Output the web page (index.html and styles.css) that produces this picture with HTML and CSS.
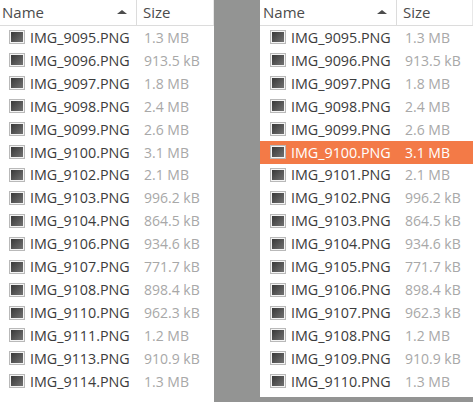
FILE: index.html
```html
<!DOCTYPE html>
<html lang="en">
<head>
  <meta charset="utf-8">
  <title>Files</title>
  <link rel="stylesheet" href="styles.css">
</head>
<body>
  <section class="pane">
    <div class="head"><div class="col-name">Name<span class="arrow"></span></div><div class="col-size">Size</div></div>
    <div class="row"><i class="thumb"></i><span class="name">IMG_9095.PNG</span><span class="size">1.3 MB</span></div>
    <div class="row"><i class="thumb"></i><span class="name">IMG_9096.PNG</span><span class="size">913.5 kB</span></div>
    <div class="row"><i class="thumb"></i><span class="name">IMG_9097.PNG</span><span class="size">1.8 MB</span></div>
    <div class="row"><i class="thumb"></i><span class="name">IMG_9098.PNG</span><span class="size">2.4 MB</span></div>
    <div class="row"><i class="thumb"></i><span class="name">IMG_9099.PNG</span><span class="size">2.6 MB</span></div>
    <div class="row"><i class="thumb"></i><span class="name">IMG_9100.PNG</span><span class="size">3.1 MB</span></div>
    <div class="row"><i class="thumb"></i><span class="name">IMG_9102.PNG</span><span class="size">2.1 MB</span></div>
    <div class="row"><i class="thumb"></i><span class="name">IMG_9103.PNG</span><span class="size">996.2 kB</span></div>
    <div class="row"><i class="thumb"></i><span class="name">IMG_9104.PNG</span><span class="size">864.5 kB</span></div>
    <div class="row"><i class="thumb"></i><span class="name">IMG_9106.PNG</span><span class="size">934.6 kB</span></div>
    <div class="row"><i class="thumb"></i><span class="name">IMG_9107.PNG</span><span class="size">771.7 kB</span></div>
    <div class="row"><i class="thumb"></i><span class="name">IMG_9108.PNG</span><span class="size">898.4 kB</span></div>
    <div class="row"><i class="thumb"></i><span class="name">IMG_9110.PNG</span><span class="size">962.3 kB</span></div>
    <div class="row"><i class="thumb"></i><span class="name">IMG_9111.PNG</span><span class="size">1.2 MB</span></div>
    <div class="row"><i class="thumb"></i><span class="name">IMG_9113.PNG</span><span class="size">910.9 kB</span></div>
    <div class="row"><i class="thumb"></i><span class="name">IMG_9114.PNG</span><span class="size">1.3 MB</span></div>
  </section>
  <section class="pane pane-right">
    <div class="head"><div class="col-name">Name<span class="arrow"></span></div><div class="col-size">Size</div></div>
    <div class="row"><i class="thumb"></i><span class="name">IMG_9095.PNG</span><span class="size">1.3 MB</span></div>
    <div class="row"><i class="thumb"></i><span class="name">IMG_9096.PNG</span><span class="size">913.5 kB</span></div>
    <div class="row"><i class="thumb"></i><span class="name">IMG_9097.PNG</span><span class="size">1.8 MB</span></div>
    <div class="row"><i class="thumb"></i><span class="name">IMG_9098.PNG</span><span class="size">2.4 MB</span></div>
    <div class="row"><i class="thumb"></i><span class="name">IMG_9099.PNG</span><span class="size">2.6 MB</span></div>
    <div class="row selected"><i class="thumb"></i><span class="name">IMG_9100.PNG</span><span class="size">3.1 MB</span></div>
    <div class="row"><i class="thumb"></i><span class="name">IMG_9101.PNG</span><span class="size">2.1 MB</span></div>
    <div class="row"><i class="thumb"></i><span class="name">IMG_9102.PNG</span><span class="size">996.2 kB</span></div>
    <div class="row"><i class="thumb"></i><span class="name">IMG_9103.PNG</span><span class="size">864.5 kB</span></div>
    <div class="row"><i class="thumb"></i><span class="name">IMG_9104.PNG</span><span class="size">934.6 kB</span></div>
    <div class="row"><i class="thumb"></i><span class="name">IMG_9105.PNG</span><span class="size">771.7 kB</span></div>
    <div class="row"><i class="thumb"></i><span class="name">IMG_9106.PNG</span><span class="size">898.4 kB</span></div>
    <div class="row"><i class="thumb"></i><span class="name">IMG_9107.PNG</span><span class="size">962.3 kB</span></div>
    <div class="row"><i class="thumb"></i><span class="name">IMG_9108.PNG</span><span class="size">1.2 MB</span></div>
    <div class="row"><i class="thumb"></i><span class="name">IMG_9109.PNG</span><span class="size">910.9 kB</span></div>
    <div class="row"><i class="thumb"></i><span class="name">IMG_9110.PNG</span><span class="size">1.3 MB</span></div>
  </section>
</body>
</html>
```

FILE: styles.css
```css
html, body { margin: 0; height: 100%; overflow: hidden; }
body { display: flex; justify-content: space-between; align-items: flex-start; width: 473px; height: 402px; background: #939493; font-family: "Open Sans", sans-serif; font-size: 14.3px; color: #3c3c3c; }

.pane { width: 214px; height: 402px; background: #fff; }
.pane-right { width: 213px; height: 397px; }

.head { display: flex; height: 25px; border-bottom: 1px solid #dcdcdc; font-size: 15px; color: #4c4c4c; }
.col-name { display: flex; justify-content: space-between; align-items: center; width: 137px; padding: 0 0 2px 2px; box-sizing: border-box; border-right: 1px solid #dcdcdc; }
.col-size { display: flex; align-items: center; padding: 0 0 2px 6px; flex: 1; border-right: 1px solid #e8e8e8; }
.arrow { width: 0; height: 0; margin-right: 9px; border-left: 5px solid transparent; border-right: 5px solid transparent; border-bottom: 4px solid #4c4c4c; }

.row { display: flex; align-items: center; height: 22.93px; padding-left: 9px; white-space: nowrap; }
.thumb { width: 16px; height: 14px; margin-right: 5px; box-sizing: border-box; border: 1px solid #b9b9b9; background: linear-gradient(135deg, #333, #777) padding-box; box-shadow: inset 0 0 0 1px #f4f4f4; }
.name { width: 114px; }
.size { color: #a8a8a8; font-size: 14px; }

.selected { background: #f37a47; color: #fff; }
.selected .size { color: #fff; }

.pane-right .col-name { padding-left: 3px; }
.pane-right .row { padding-left: 10px; }
```
